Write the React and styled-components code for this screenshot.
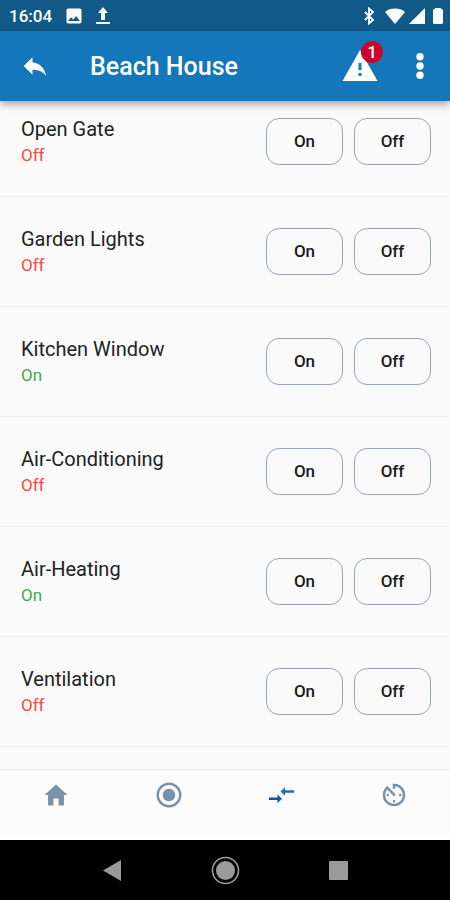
import React from "react"
import styled, { createGlobalStyle } from "styled-components"
import { IoMdHome } from "react-icons/io"
import {
  MdAvTimer,
  MdImage,
  MdRadioButtonChecked,
  MdReply
} from "react-icons/md"

const GlobalStyle = createGlobalStyle`
  * {
    box-sizing: border-box;
  }

  body {
    margin: 0;
    background: #fafafa;
    font-family: Roboto, "Liberation Sans", sans-serif;
  }

  button {
    font-family: inherit;
    padding: 0;
    border: 0;
    background: none;
    cursor: pointer;
  }

  svg {
    display: block;
  }
`

const devices = [
  { name: "Open Gate", on: false },
  { name: "Garden Lights", on: false },
  { name: "Kitchen Window", on: true },
  { name: "Air-Conditioning", on: false },
  { name: "Air-Heating", on: true },
  { name: "Ventilation", on: false }
]

const Screen = styled.div`
  display: flex;
  flex-direction: column;
  height: 100vh;
`

const StatusBar = styled.div`
  display: flex;
  align-items: center;
  justify-content: space-between;
  flex: none;
  height: 31px;
  padding: 0 7px 0 9px;
  background: #115a88;
  color: #fff;
  z-index: 1;
`

const StatusGroup = styled.div`
  display: flex;
  align-items: center;
  gap: ${props => props.$gap}px;
`

const Clock = styled.span`
  font-size: 17px;
  line-height: 20px;
  font-weight: 500;
`

const Header = styled.header`
  display: flex;
  align-items: center;
  flex: none;
  height: 70px;
  padding: 0 18px 0 20px;
  background: #1477ba;
  color: #fff;
  box-shadow: 0 3px 8px rgba(60, 40, 30, 0.45);
  z-index: 1;
`

const Title = styled.h1`
  flex: 1;
  margin: 0 0 0 40px;
  padding-top: 2px;
  font-size: 25px;
  line-height: 32px;
  font-weight: 500;
`

const HeaderButton = styled.button`
  position: relative;
  display: flex;
  align-items: center;
  justify-content: center;
  width: ${props => props.$width}px;
  height: 40px;
  color: #fff;
`

const Badge = styled.span`
  position: absolute;
  top: -5px;
  right: -3px;
  width: 22px;
  height: 22px;
  border-radius: 50%;
  background: #c8042c;
  font-size: 17px;
  line-height: 22px;
  font-weight: 500;
  text-align: center;
`

const HeaderActions = styled.div`
  display: flex;
  gap: 28px;
`

// scrolled a little, the first row runs under the header
const List = styled.ul`
  flex: 1;
  min-height: 0;
  margin: -14px 0 0;
  padding: 0;
  overflow: hidden;
  list-style: none;
`

const Row = styled.li`
  display: flex;
  align-items: center;
  justify-content: space-between;
  height: 110px;
  padding: 0 19px 0 21px;
  border-bottom: 1px solid #efefef;
`

const Name = styled.div`
  font-size: 20px;
  line-height: 26px;
  color: #222;
`

const State = styled.div`
  font-size: 17px;
  line-height: 26px;
  color: ${props => (props.$on ? "#43a84b" : "#f44b42")};
`

const Buttons = styled.div`
  display: flex;
  gap: 11px;
`

const SwitchButton = styled.button`
  && {
    width: 77px;
    height: 47px;
    padding-bottom: 2px;
    border: 1px solid #97a5bb;
    border-radius: 13px;
    font-size: 17px;
    font-weight: 500;
    color: #1c1c1c;
  }
`

const TabBar = styled.nav`
  display: flex;
  flex: none;
  height: 71px;
  border-top: 1px solid #ededed;
  border-bottom: 4px solid #fff;
  background: #fbfbfb;
`

const Tab = styled.button`
  display: flex;
  flex: 1;
  justify-content: center;
  align-items: center;
  height: 50px;
  color: #7890a8;
`

const SystemBar = styled.div`
  display: flex;
  align-items: center;
  justify-content: center;
  gap: 84px;
  flex: none;
  height: 60px;
  background: #000;
`

const SystemButton = styled.button`
  width: 29px;
  height: 29px;
`

const UploadIcon = () => (
  <svg width="14" height="18" viewBox="0 0 14 18" fill="#fff">
    <path d="M7 0l5 6H9v7H5V6H2zM0 15h14v2H0z" />
  </svg>
)

const BluetoothIcon = () => (
  <svg width="14" height="18" viewBox="0 0 14 18" fill="none" stroke="#fff" strokeWidth="1.8">
    <path d="M2 5l8 8-4 3.500V1.500L10 5l-8 8" />
  </svg>
)

const WifiIcon = () => (
  <svg width="20" height="16" viewBox="0 0 20 16" fill="#fff">
    <path d="M10 16L0 4C5-.6 15-.6 20 4z" />
  </svg>
)

const SignalIcon = () => (
  <svg width="16" height="16" viewBox="0 0 16 16" fill="#fff">
    <path d="M16 0v16H0z" />
  </svg>
)

const BatteryIcon = () => (
  <svg width="10" height="16" viewBox="0 0 10 16" fill="#fff">
    <path d="M2 0h6v1h1l1 1v13l-1 1H1l-1-1V2l1-1h1z" />
  </svg>
)

const WarningIcon = () => (
  <svg width="36" height="32" viewBox="0 0 36 32">
    <path d="M18 0l17.5 31H.5z" fill="#fff" />
    <path d="M16.5 13h3v7h-3zM16.5 23h3v3h-3z" fill="#1477ba" />
  </svg>
)

const MoreIcon = () => (
  <svg width="8" height="26" viewBox="0 0 8 26" fill="#fff">
    <circle cx="4" cy="3.7" r="3.7" />
    <circle cx="4" cy="13" r="3.7" />
    <circle cx="4" cy="22.3" r="3.7" />
  </svg>
)

const SwitchIcon = () => (
  <svg width="30" height="30" viewBox="0 0 30 30">
    <path d="M3 17.500h8.500V14.500l4.500 4.300-4.500 4.200v-3H3z" fill="#0d55a3" />
    <path d="M28 10.200h-9V7.200l-4.500 4.200 4.500 4.300v-3h9z" fill="#1470b8" />
  </svg>
)

const Device = ({ name, on }) => (
  <Row>
    <div>
      <Name>{name}</Name>
      <State $on={on}>{on ? "On" : "Off"}</State>
    </div>
    <Buttons>
      <SwitchButton type="button">On</SwitchButton>
      <SwitchButton type="button">Off</SwitchButton>
    </Buttons>
  </Row>
)

const App = () => (
  <Screen>
    <GlobalStyle />
    <StatusBar>
      <StatusGroup $gap={12}>
        <Clock>16:04</Clock>
        <MdImage size={20} />
        <UploadIcon />
      </StatusGroup>
      <StatusGroup $gap={4}>
        <BluetoothIcon />
        <span />
        <WifiIcon />
        <SignalIcon />
        <span />
        <BatteryIcon />
      </StatusGroup>
    </StatusBar>
    <Header>
      <HeaderButton type="button" aria-label="Back" $width={30}>
        <MdReply size={30} />
      </HeaderButton>
      <Title>Beach House</Title>
      <HeaderActions>
        <HeaderButton type="button" aria-label="Alerts" $width={40}>
          <WarningIcon />
          <Badge>1</Badge>
        </HeaderButton>
        <HeaderButton type="button" aria-label="More" $width={24}>
          <MoreIcon />
        </HeaderButton>
      </HeaderActions>
    </Header>
    <List>
      {devices.map(device => (
        <Device key={device.name} {...device} />
      ))}
    </List>
    <TabBar>
      <Tab type="button" aria-label="Home">
        <IoMdHome size={28} />
      </Tab>
      <Tab type="button" aria-label="States">
        <MdRadioButtonChecked size={30} />
      </Tab>
      <Tab type="button" aria-label="Switches">
        <SwitchIcon />
      </Tab>
      <Tab type="button" aria-label="Timers">
        <MdAvTimer size={30} />
      </Tab>
    </TabBar>
    <SystemBar>
      <SystemButton type="button" aria-label="System back">
        <svg width="29" height="29" viewBox="0 0 29 29" fill="#9a9a9a">
          <path d="M23 4v21L5 14.5z" />
        </svg>
      </SystemButton>
      <SystemButton type="button" aria-label="System home">
        <svg width="29" height="29" viewBox="0 0 29 29" fill="#9a9a9a">
          <circle cx="14.5" cy="14.5" r="9.5" />
          <circle cx="14.5" cy="14.5" r="13" fill="none" stroke="#9a9a9a" strokeWidth="1.6" />
        </svg>
      </SystemButton>
      <SystemButton type="button" aria-label="Recent apps">
        <svg width="29" height="29" viewBox="0 0 29 29" fill="#9a9a9a">
          <rect x="5" y="5" width="19" height="19" rx="1" />
        </svg>
      </SystemButton>
    </SystemBar>
  </Screen>
)

export default App
